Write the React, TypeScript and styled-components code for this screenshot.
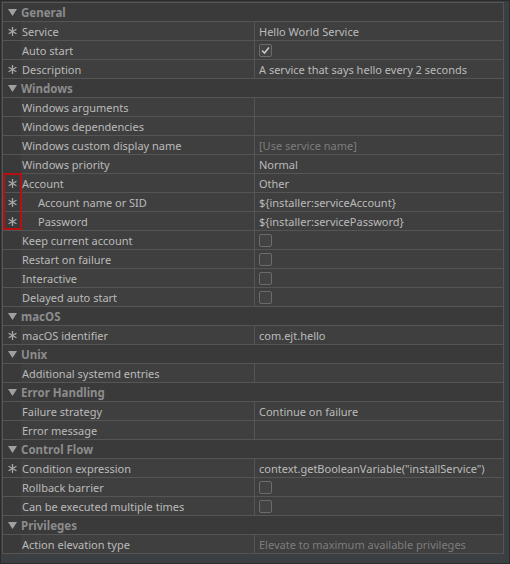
import React, { FC } from 'react';
import styled, { createGlobalStyle } from 'styled-components';

const GlobalStyle = createGlobalStyle`
  html, body {
    margin: 0;
    padding: 0;
    background: #3c3f41;
  }
  body {
    font-family: 'Noto Sans', 'Open Sans', sans-serif;
    font-size: 11px;
    color: #bbbbbb;
  }
`;

type Entry =
  | { kind: 'group'; title: string }
  | {
      kind: 'prop';
      name: string;
      required?: boolean;
      indent?: boolean;
      value?: string;
      placeholder?: boolean;
      check?: 'on' | 'off';
    };

const entries: Entry[] = [
  { kind: 'group', title: 'General' },
  { kind: 'prop', name: 'Service', required: true, value: 'Hello World Service' },
  { kind: 'prop', name: 'Auto start', check: 'on' },
  { kind: 'prop', name: 'Description', required: true, value: 'A service that says hello every 2 seconds' },
  { kind: 'group', title: 'Windows' },
  { kind: 'prop', name: 'Windows arguments' },
  { kind: 'prop', name: 'Windows dependencies' },
  { kind: 'prop', name: 'Windows custom display name', value: '[Use service name]', placeholder: true },
  { kind: 'prop', name: 'Windows priority', value: 'Normal' },
  { kind: 'prop', name: 'Account', required: true, value: 'Other' },
  { kind: 'prop', name: 'Account name or SID', required: true, indent: true, value: '${installer:serviceAccount}' },
  { kind: 'prop', name: 'Password', required: true, indent: true, value: '${installer:servicePassword}' },
  { kind: 'prop', name: 'Keep current account', check: 'off' },
  { kind: 'prop', name: 'Restart on failure', check: 'off' },
  { kind: 'prop', name: 'Interactive', check: 'off' },
  { kind: 'prop', name: 'Delayed auto start', check: 'off' },
  { kind: 'group', title: 'macOS' },
  { kind: 'prop', name: 'macOS identifier', required: true, value: 'com.ejt.hello' },
  { kind: 'group', title: 'Unix' },
  { kind: 'prop', name: 'Additional systemd entries' },
  { kind: 'group', title: 'Error Handling' },
  { kind: 'prop', name: 'Failure strategy', value: 'Continue on failure' },
  { kind: 'prop', name: 'Error message' },
  { kind: 'group', title: 'Control Flow' },
  { kind: 'prop', name: 'Condition expression', required: true, value: 'context.getBooleanVariable("installService")' },
  { kind: 'prop', name: 'Rollback barrier', check: 'off' },
  { kind: 'prop', name: 'Can be executed multiple times', check: 'off' },
  { kind: 'group', title: 'Privileges' },
  { kind: 'prop', name: 'Action elevation type', value: 'Elevate to maximum available privileges', placeholder: true },
];

const Frame = styled.div`
  width: 510px;
  height: 564px;
  box-sizing: border-box;
  border: 1px solid #2b2b2b;
  background: #3c3f41;
  padding: 1px 5px 0 1px;
  overflow: hidden;
`;

const Sheet = styled.div`
  position: relative;
  border-left: 1px solid #555555;
  border-right: 1px solid #555555;
  border-top: 1px solid #555555;
`;

const GroupRow = styled.div`
  height: 18px;
  display: flex;
  align-items: center;
  gap: 4px;
  padding-left: 5px;
  border-bottom: 1px solid #555555;
  background: #3a3a3a;
  color: #8c8c8c;
  font-weight: bold;
  font-size: 11.5px;
`;

const PropRow = styled.div`
  height: 18px;
  display: grid;
  grid-template-columns: 18px 234px 1fr;
  border-bottom: 1px solid #555555;
  background: #3f3f3f;
`;

const Gutter = styled.div`
  display: flex;
  align-items: center;
  justify-content: center;
  background: #3a3a3a;
`;

const NameCell = styled.div<{ $indent?: boolean }>`
  display: flex;
  align-items: center;
  padding-left: ${(p) => (p.$indent ? '17px' : '1px')};
  border-right: 1px solid #555555;
  white-space: nowrap;
  overflow: hidden;
`;

const ValueCell = styled.div<{ $dim?: boolean }>`
  display: flex;
  align-items: center;
  padding-left: 4px;
  color: ${(p) => (p.$dim ? '#7d7d7d' : '#bbbbbb')};
  white-space: nowrap;
  overflow: hidden;
`;

const Box = styled.span`
  width: 13px;
  height: 13px;
  box-sizing: border-box;
  border: 1px solid #6b6b6b;
  border-radius: 2px;
  background: #434343;
  display: flex;
  align-items: center;
  justify-content: center;
`;

const Highlight = styled.div`
  position: absolute;
  left: 0px;
  top: 170px;
  width: 19px;
  height: 57px;
  border: 2px solid #b81010;
  box-sizing: border-box;
  pointer-events: none;
`;

const Arrow: FC = () => (
  <svg width="9" height="9" viewBox="0 0 9 9">
    <path d="M0 1 L9 1 L4.5 8 Z" fill="#a0a0a0" />
  </svg>
);

const Star: FC = () => (
  <svg width="9" height="9" viewBox="0 0 9 9">
    <g stroke="#a8a8a8" strokeWidth="1.3" strokeLinecap="round">
      <line x1="4.5" y1="0.5" x2="4.5" y2="8.5" />
      <line x1="1" y1="2.5" x2="8" y2="6.5" />
      <line x1="1" y1="6.5" x2="8" y2="2.5" />
    </g>
  </svg>
);

const CheckBox: FC<{ on: boolean }> = ({ on }) => (
  <Box>
    {on ? (
      <svg width="11" height="11" viewBox="0 0 11 11">
        <path d="M2 5.5 L4.5 8 L9 2.5" fill="none" stroke="#c8c8c8" strokeWidth="1.6" />
      </svg>
    ) : null}
  </Box>
);

const App: FC = () => (
  <>
    <GlobalStyle />
    <Frame>
      <Sheet>
        {entries.map((e, i) =>
          e.kind === 'group' ? (
            <GroupRow key={i}>
              <Arrow />
              {e.title}
            </GroupRow>
          ) : (
            <PropRow key={i}>
              <Gutter>{e.required ? <Star /> : null}</Gutter>
              <NameCell $indent={e.indent}>{e.name}</NameCell>
              <ValueCell $dim={e.placeholder}>
                {e.check ? <CheckBox on={e.check === 'on'} /> : e.value}
              </ValueCell>
            </PropRow>
          ),
        )}
        <Highlight />
      </Sheet>
    </Frame>
  </>
);

export default App;
